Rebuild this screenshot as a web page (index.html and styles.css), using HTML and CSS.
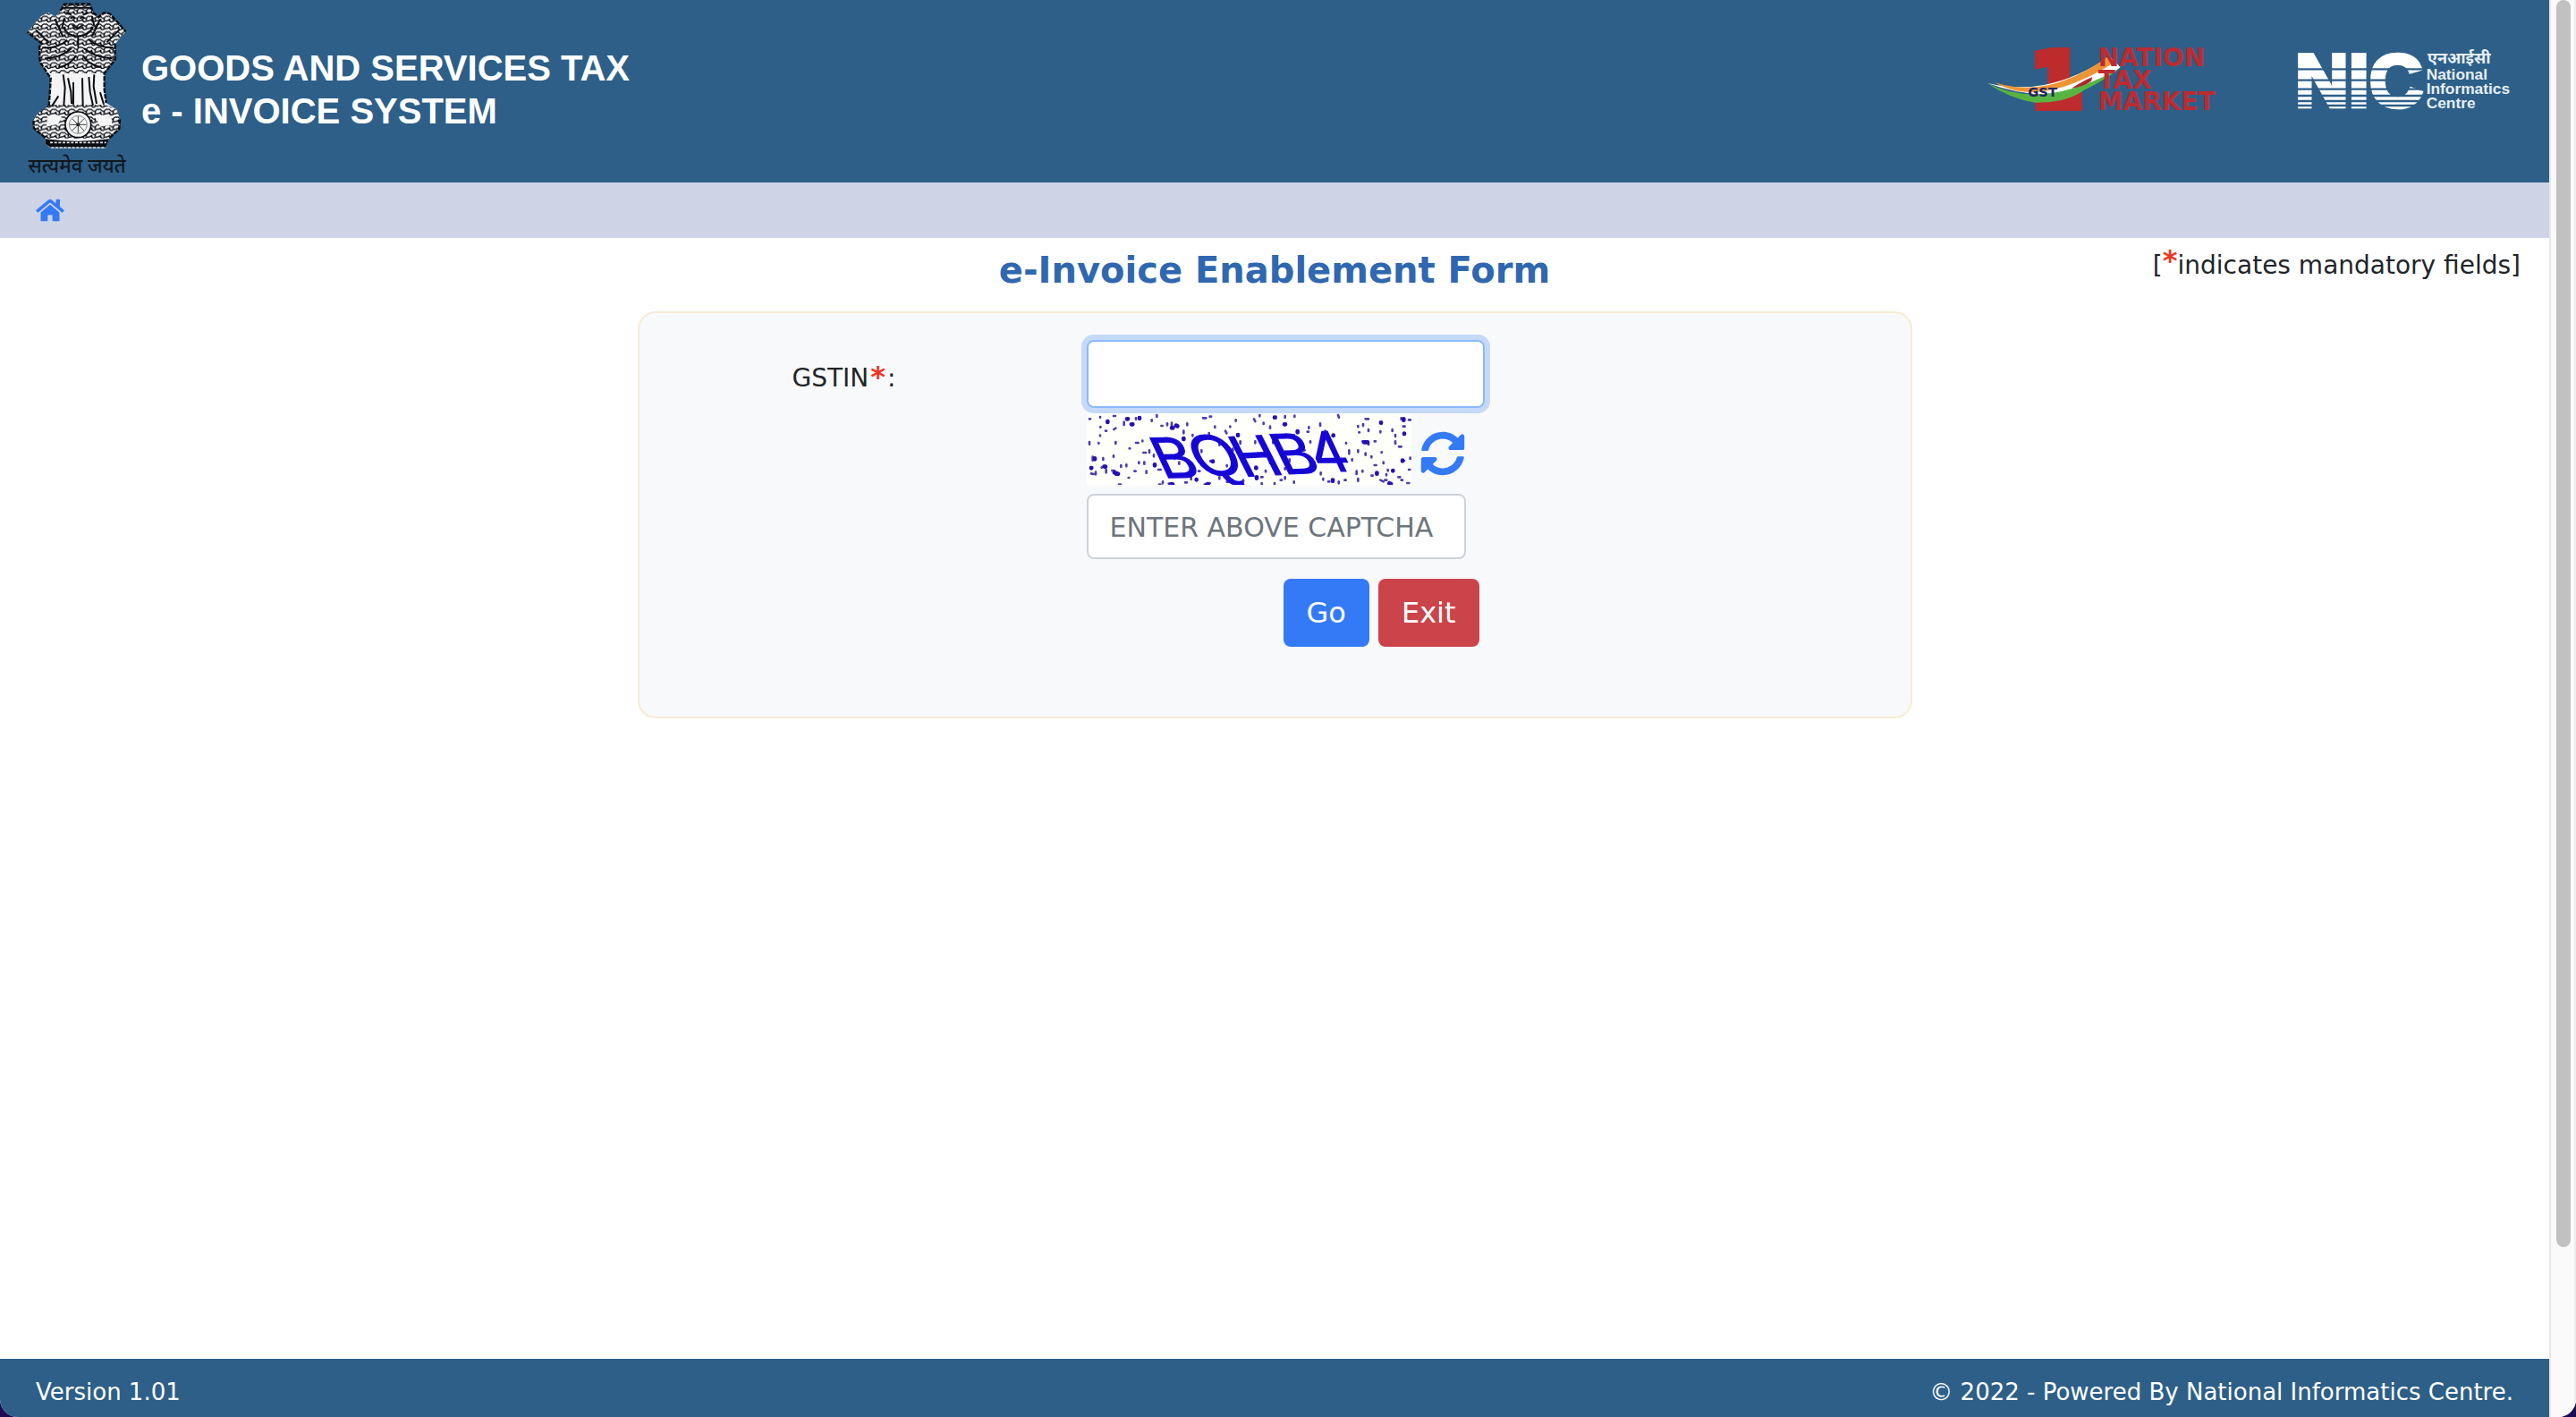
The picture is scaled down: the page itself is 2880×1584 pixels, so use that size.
FILE: index.html
```html
<!DOCTYPE html>
<html lang="en">
<head>
<meta charset="utf-8">
<title>e-Invoice Enablement Form</title>
<link rel="stylesheet" href="styles.css">
</head>
<body>
<div class="window">
<div class="page">
  <header class="header">
    <svg class="emblem" viewBox="84 0 348 600" role="img" aria-label="National emblem">
      <defs>
        <pattern id="mane" width="30" height="26" patternUnits="userSpaceOnUse">
          <path d="M-2 6q6-7 12 0t12 0 12 0M-2 19q5-7 10-1t10 2 14-2M6 11l4 5M22 9l-5 7" fill="none" stroke="#0a0d12" stroke-width="4"/>
        </pattern>
      </defs>
      <path d="M203 36L216 14 300 13 313 42 330 58 350 42 368 46 392 72 422 106 404 126 386 148 386 200 366 226 350 246 350 300 356 345 392 368 402 400 400 432 366 464 356 496 170 496 152 482 152 462 114 430 112 405 128 378 164 356 168 300 170 262 134 208 132 158 140 146 92 108 138 54 164 42 186 56Z" fill="#f4f4f4"/>
      <path d="M203 36L216 14 300 13 313 42 330 58 350 42 368 46 392 72 422 106 404 126 386 148 386 200 366 226 350 246H170L134 208 132 158 140 146 92 108 138 54 164 42 186 56Z" fill="url(#mane)"/>
      <path d="M164 352H356L392 368 402 400 400 432 366 464H152L114 430 112 405 128 378Z" fill="url(#mane)"/>
      <path d="M203 36L216 14 300 13 313 42 330 58 350 42 368 46 392 72 422 106M386 148V200L366 226 350 246V300L356 345M402 400L400 432 366 464M152 462L114 430 112 405M164 356L168 300 170 262 134 208 132 158 140 146 92 108" fill="none" stroke="#0a0d12" stroke-width="7" stroke-dasharray="16 4"/>
      <path d="M212 26H306M222 42l18 8M296 42l-18 8M236 62q8-8 16 0M268 62q8-8 16 0M242 84l18 12 18-12M212 92q14 28 48 30 38-2 52-32M216 60l-8 34M308 54l8 32M262 126v34M184 64l28 60M336 64l-26 56M120 100l44 44M402 98l-44 44M142 160q50 4 84-26M380 160q-52 0-84-28M150 196q50 0 90-34M376 196q-56-2-94-34M196 226q40-8 60-40M338 226q-44-10-60-40" fill="none" stroke="#0a0d12" stroke-width="6"/>
      <path d="M212 250l6 44-4 60M228 262l10 46 2 40M246 276v74M276 262l2 92M298 258l4 50 10 46M316 250l-2 40 10 58M196 322l-22 34M336 310l12 40" fill="none" stroke="#0a0d12" stroke-width="6"/>
      <path d="M158 392q26-18 50 2l-14 22-38 8zM318 392q26-14 56 2l2 26-40 4z" fill="#f4f4f4"/>
      <circle cx="262" cy="418" r="43" fill="#f4f4f4" stroke="#0a0d12" stroke-width="5"/>
      <circle cx="262" cy="418" r="30" fill="none" stroke="#888" stroke-width="3"/>
      <path d="M262 390v56M234 418h56M242 398l40 40M282 398l-40 40" stroke="#444" stroke-width="3"/>
      <circle cx="262" cy="418" r="6" fill="#222"/>
      <path d="M152 466q110 14 214 0l-10 28H170l-18-12z" fill="#0a0d12"/>
      <path d="M168 478H356M172 495H354" stroke="#ddd" stroke-width="5" stroke-dasharray="9 5"/>
      <text class="motto" x="258" y="579" text-anchor="middle">सत्यमेव जयते</text>
    </svg>
    <div class="brand">GOODS AND SERVICES TAX<br>e - INVOICE SYSTEM</div>
    <svg class="gst-logo" viewBox="0 0 1020 330" role="img" aria-label="GST: One Nation Tax Market">
      <text class="gst-one" x="182" y="268">1</text>
      <path d="M34 188Q240 240 445 100L482 135Q300 285 34 188Z" fill="#fff"/>
      <path d="M60 186Q240 246 440 100L448 128Q260 240 130 214 90 204 60 186Z" fill="#ee9435"/>
      <path d="M34 188Q220 284 482 138 420 185 360 212 300 256 195 254 110 240 34 188Z" fill="#58b440"/>
      <path d="M318 206Q355 182 388 168L384 182Q355 202 318 206Z" fill="#a8292b"/>
      <text class="gst-word" x="172" y="235">GST</text>
      <text class="gst-text" x="407" y="132">NATION</text>
      <text class="gst-text" x="407" y="208">TAX</text>
      <text class="gst-text" x="407" y="280">MARKET</text>
    </svg>
    <svg class="nic-logo" viewBox="0 0 780 330" role="img" aria-label="National Informatics Centre">
      <text class="nic-big" x="48" y="268">N</text>
      <text class="nic-big" x="227" y="268">I</text>
      <text class="nic-big" x="297" y="268">C</text>
      <path d="M50 142H482M50 179H482M50 209H482M50 231H482M50 249H482M50 264H482" stroke="#2d5f88" stroke-width="7"/>
      <text class="nic-hindi" x="492" y="122">एनआईसी</text>
      <text class="nic-text" x="488" y="178">National</text>
      <text class="nic-text" x="488" y="226">Informatics</text>
      <text class="nic-text" x="488" y="274">Centre</text>
    </svg>
  </header>
  <nav class="nav">
    <a href="#" class="home" aria-label="Home">
      <svg viewBox="0 0 576 512"><path d="M280.37 148.26L96 300.11V464a16 16 0 0 0 16 16l112.06-.29a16 16 0 0 0 15.92-16V368a16 16 0 0 1 16-16h64a16 16 0 0 1 16 16v95.64a16 16 0 0 0 16 16.05L464 480a16 16 0 0 0 16-16V300L295.67 148.26a12.19 12.19 0 0 0-15.3 0zM571.6 251.47L488 182.56V44.05a12 12 0 0 0-12-12h-56a12 12 0 0 0-12 12v72.61L318.47 43a48 48 0 0 0-61 0L4.34 251.47a12 12 0 0 0-1.6 16.9l25.5 31A12 12 0 0 0 45.15 301l235.22-193.74a12.19 12.19 0 0 1 15.3 0L530.9 301a12 12 0 0 0 16.9-1.6l25.5-31a12 12 0 0 0-1.7-16.93z"/></svg>
    </a>
  </nav>
  <main class="main">
    <div class="heading">
      <h1 class="title">e-Invoice Enablement Form</h1>
      <p class="note">[<sup class="star">*</sup>indicates mandatory fields]</p>
    </div>
    <form class="card">
      <label class="label" for="gstin">GSTIN<span class="star">*</span>:</label>
      <div class="fields">
        <input class="input gstin" id="gstin" type="text">
        <div class="captcha-row">
          <svg class="captcha" viewBox="75 306 1089 240" role="img" aria-label="Captcha image">
            <path class="dots" d="M84 325h3M120 318v2M121 351v2M165 315h6M200 335v10M240 322v4M310 312v6M293 328v4M325 348h4M345 340v6M360 338v10M412 340v6M400 365v8M465 322h10M488 317h4M575 328v4M556 350v2M636 325l4 8M655 312v4M668 338v4M690 350v6M740 315v6M772 314v4M770 378v12M815 368h4M820 352v4M858 340v8M875 365v4M900 380h4M918 312l3 8M945 405v2M985 348v4M988 370h2M1002 342v6M1010 325h10M1020 360v6M1064 336v4M1060 366v4M1100 360v6M1110 378v6M1130 322v4M1155 328h6M1136 350h6M84 402v8M95 452v12M115 405v2M130 456v6M120 380v2M172 402v6M165 448v4M138 365h3M166 360l6-4M240 405h8M265 438h8M285 430v8M262 398v2M218 424h2M208 478v6M235 500h4M250 470v4M215 522h2M88 488h6M90 508l8 2M105 503v8M125 488l8-6M140 495v10M160 498h8M172 512h8M190 480v6M183 545h6M268 470v6M300 445v6M275 500v6M315 495h8M330 535v6M350 542h4M318 545h4M385 470v6M440 448l3 8M460 470v8M450 500h4M405 538h6M425 520v8M470 545h6M480 540h8M520 520v6M545 536h4M560 530h4M590 545v-6M600 530v6M620 500v6M640 490h6M660 520h5M662 540v6M675 498v4M705 540v4M725 530h4M740 520v6M770 535v4M700 480v4M860 505v6M868 525v4M885 535h4M900 528v8M925 480h8M920 535v6M940 530h4M955 430v12M980 500v10M985 525v8M1000 498v4M1010 440v6M1000 400h10M1020 405v6M1040 400h4M1064 436v2M1080 510v4M1085 495v4M1095 545l-6-8M1060 530l10 5M1050 505v4M1075 530h6M1070 470v4M1040 480h6M1030 515h4M1030 450v4M1110 400v8M1122 418h8M1136 465h4M1120 520h6M1155 495h4M1130 530h4M1150 540h6M1160 455v4M965 460v4M985 430v6M540 365l4 8M485 372v10M505 350v4M430 378v4M520 405v8M460 430v6M370 455v4M800 430h6M755 460v8M740 490v4M825 400v4M565 425v6M590 400v8M640 400v6M700 400v6M490 465v3M545 480v4M690 470v3"/>
            <path class="dots big" d="M145 333v3M210 325h3M252 321v2M225 343h4M375 347l4 2M360 355h4M705 320h2M738 343h3M782 366v4M582 378v2M1062 337v1M1140 374v1M1005 403h12M90 489v1M168 505l12 4M303 478v3M135 485h3M1134 464v2M1102 498v1M900 530v3M1048 506v3M1138 325v4M400 390v3M498 467v1M443 528v1M643 488v2M902 380v1M358 544h5M478 545h4M1090 541l5 2M102 457v3M645 520v4"/>
            <g class="captcha-text">
              <text transform="translate(334 523) rotate(-1) skewX(24)">B</text>
              <text transform="translate(460 516) rotate(-2) skewX(24)">Q</text>
              <text transform="translate(602 518) rotate(-3) skewX(24)">H</text>
              <text transform="translate(738 510) rotate(-2) skewX(24)">B</text>
              <text transform="translate(860 502) rotate(-1) skewX(24)">4</text>
            </g>
          </svg>
          <button class="refresh" type="button" aria-label="Refresh captcha">
            <svg viewBox="0 0 512 512"><path d="M370.72 133.28C339.458 104.008 298.888 87.962 255.848 88c-77.458.068-144.328 53.178-162.791 126.85-1.344 5.363-6.122 9.15-11.651 9.15H24.103c-7.498 0-13.194-6.807-11.807-14.176C33.933 94.924 134.813 8 256 8c66.448 0 126.791 26.136 171.315 68.685L463.03 40.97C478.149 25.851 504 36.559 504 57.941V192c0 13.255-10.745 24-24 24H345.941c-21.382 0-32.09-25.851-16.971-40.971l41.75-41.749zM32 296h134.059c21.382 0 32.09 25.851 16.971 40.971l-41.75 41.75c31.262 29.273 71.835 45.319 114.876 45.28 77.418-.07 144.315-53.144 162.787-126.849 1.344-5.363 6.122-9.15 11.651-9.15h57.304c7.498 0 13.194 6.807 11.807 14.176C478.067 417.076 377.187 504 256 504c-66.448 0-126.791-26.136-171.315-68.685L48.97 471.03C33.851 486.149 8 475.441 8 454.059V320c0-13.255 10.745-24 24-24z"/></svg>
          </button>
        </div>
        <input class="input code" type="text" placeholder="ENTER ABOVE CAPTCHA" aria-label="Enter above captcha">
        <div class="actions">
          <button class="btn go" type="submit">Go</button>
          <button class="btn exit" type="button">Exit</button>
        </div>
      </div>
    </form>
  </main>
  <footer class="footer">
    <span>Version 1.01</span>
    <span>© 2022 - Powered By National Informatics Centre.</span>
  </footer>
</div>
<div class="scrollbar"><div class="thumb"></div></div>
</div>
</body>
</html>
```
FILE: styles.css
```css
* { box-sizing: border-box; }

html { background: #1e0a52; }

body {
  margin: 0;
  font-family: Verdana, "DejaVu Sans", sans-serif;
  font-size: 28px;
  line-height: 34px;
  color: #212529;
}

.window {
  display: flex;
  min-height: 100vh;
  border-radius: 0 0 20px 20px;
  overflow: hidden;
  background: #fff;
}

.page {
  flex: 1;
  display: flex;
  flex-direction: column;
}

.header {
  display: flex;
  align-items: flex-start;
  height: 204px;
  padding: 0 40px 0 28px;
  background: #2d5f88;
}

.emblem { width: 116px; height: 200px; overflow: visible; }

.motto {
  font-family: "Noto Sans Devanagari", "Noto Sans", sans-serif;
  font-size: 66px;
  font-weight: 500;
  fill: #10181f;
}

.brand {
  flex: 1;
  padding: 52px 0 0 14px;
  font: bold 40px/48px "Liberation Sans", Arial, sans-serif;
  color: #fff;
}

.gst-logo { width: 340px; height: 110px; margin-top: 30px; }
.nic-logo { width: 260px; height: 110px; margin-top: 30px; }

.gst-one {
  font: bold 250px "DejaVu Sans", sans-serif;
  fill: #bd2b2d;
  stroke: #bd2b2d;
  stroke-width: 30px;
}
.gst-word { font: bold 44px "DejaVu Sans", sans-serif; fill: #1f2266; }
.gst-text { font: bold 84px "DejaVu Sans", sans-serif; fill: #bd2b31; }

.nic-big {
  font: bold 248px "Liberation Sans", Arial, sans-serif;
  fill: #fff;
  stroke: #fff;
  stroke-width: 14px;
}
.nic-text { font: bold 52px "Liberation Sans", Arial, sans-serif; fill: #e6eef6; }
.nic-hindi { font: bold 54px "Noto Sans Devanagari", "Noto Sans", sans-serif; fill: #e6eef6; }

.nav {
  display: flex;
  align-items: center;
  height: 62px;
  padding: 0 40px;
  background: #ced3e6;
}

.home svg { display: block; width: 32px; height: 28px; fill: #347af7; }

.main { flex: 1; padding-top: 12px; }

.heading {
  display: grid;
  grid-template-columns: 1fr auto 1fr;
  align-items: start;
  padding: 0 32px;
  margin-bottom: 22px;
}

.title {
  grid-column: 2;
  margin: 0;
  font-size: 40px;
  line-height: 48px;
  color: #2f67b0;
}

.note { margin: 0; padding-top: 2px; justify-self: end; }

.star {
  padding: 0 2px;
  font-size: 32px;
  font-weight: bold;
  line-height: 0;
  color: #ef3624;
}
sup.star { padding: 0; vertical-align: 4px; }

.card {
  display: grid;
  grid-template-columns: 329px 445px;
  width: 50%;
  margin: 0 auto;
  padding: 30px 6% 78px;
  border: 2px solid #f7ecd3;
  border-radius: 20px;
  background: #f8f9fb;
}

.label { padding-top: 26px; }

.fields { display: flex; flex-direction: column; }

.input {
  padding: 2px 24px 0;
  border: 2px solid #ced3da;
  border-radius: 8px;
  background: #fff;
  font: inherit;
  font-size: 30px;
  color: #495057;
  outline: none;
}
.input::placeholder { color: #6c757d; opacity: 1; }

.gstin {
  height: 76px;
  border-color: #8cb9fb;
  box-shadow: 0 0 0 6px #c5d9fa;
}

.captcha-row {
  display: flex;
  align-items: flex-end;
  gap: 10px;
  margin: 6px 0 10px;
}

.captcha { width: 363px; height: 80px; background: #fffffb; }

.dots { fill: none; stroke: #4a3fae; stroke-width: 8; stroke-linecap: round; }
.dots.big { stroke: #2410b4; stroke-width: 14; }

.captcha-text {
  font: 196px "Liberation Sans", Arial, sans-serif;
  fill: #1606d6;
  stroke: #1606d6;
  stroke-width: 4px;
}

.refresh { padding: 0 0 10px; border: 0; background: none; }
.refresh svg { display: block; width: 50px; height: 50px; fill: #347af7; }

.code { width: 424px; height: 73px; }

.actions {
  display: flex;
  justify-content: flex-end;
  gap: 10px;
  margin: 22px 6px 0 0;
}

.btn {
  height: 76px;
  padding: 0 26px;
  border: 0;
  border-radius: 8px;
  font: inherit;
  font-size: 32px;
  color: #fff;
}
.go { background: #347af7; }
.exit { background: #cb444a; }

.footer {
  display: flex;
  align-items: center;
  justify-content: space-between;
  height: 65px;
  padding: 8px 40px 0;
  background: #2d5f88;
  color: #fff;
  font-size: 26px;
}

.scrollbar {
  width: 30px;
  padding: 0 6px;
  border-left: 2px solid #e8e8e8;
  border-right: 2px solid #ededed;
  background: #fafafa;
}

.thumb {
  width: 16px;
  height: 88vh;
  border-radius: 8px;
  background: #c1c1c1;
}
```
